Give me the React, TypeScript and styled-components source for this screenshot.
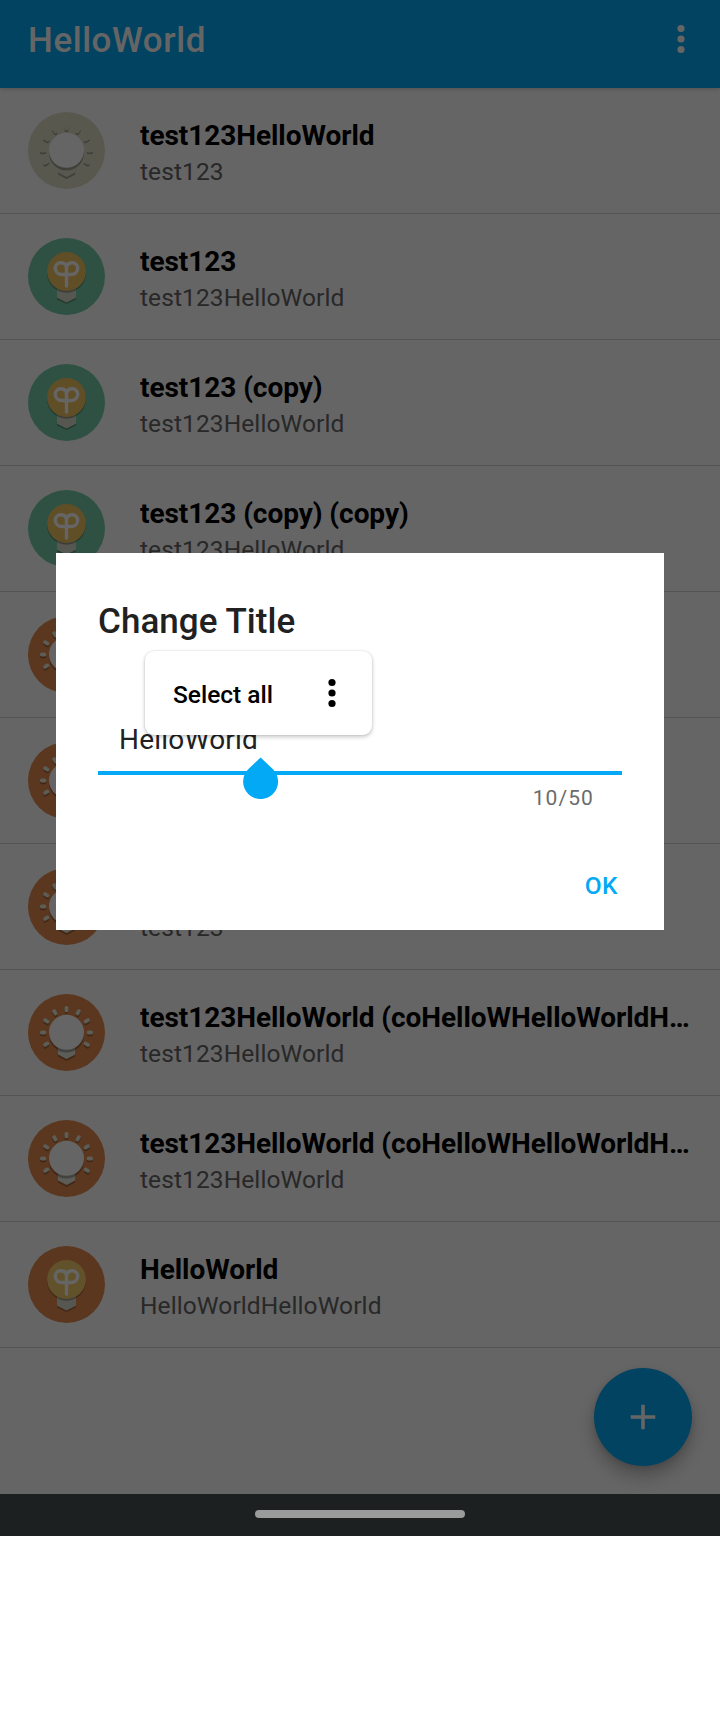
import React from "react";
import styled, { createGlobalStyle } from "styled-components";

const GlobalStyle = createGlobalStyle`
  *, *::before, *::after { box-sizing: border-box; }
  body { margin: 0; background: #fff; font-family: Roboto, "Liberation Sans", sans-serif; }
`;

const Screen = styled.div`
  position: relative;
  width: 720px;
  height: 1536px;
  display: flex;
  flex-direction: column;
  overflow: hidden;
`;

const Toolbar = styled.header`
  position: relative;
  flex: none;
  height: 88px;
  padding: 0 35px 10px 28px;
  display: flex;
  align-items: center;
  justify-content: space-between;
  background: #03a9f4;
  box-shadow: 0 1px 4px rgba(0, 0, 0, 0.2);
  color: #fff;
`;

const AppTitle = styled.h1`
  margin: 0;
  padding-top: 3px;
  font-size: 35px;
  line-height: 42px;
  font-weight: 500;
  letter-spacing: 0.55px;
`;

const List = styled.main`
  flex: 1;
  background: #fff;
`;

const Row = styled.article`
  height: 126px;
  padding: 0 28px;
  display: flex;
  align-items: center;
  gap: 35px;
  border-bottom: 1px solid #d4d4d4;
`;

const RowText = styled.div`
  flex: 1;
  min-width: 0;
  padding-top: 7px;
`;

const RowTitle = styled.div`
  font-size: 28px;
  line-height: 36px;
  font-weight: 700;
  letter-spacing: -0.06px;
  color: #000;
  white-space: nowrap;
  overflow: hidden;
  text-overflow: ellipsis;
`;

const RowSubtitle = styled.div`
  font-size: 24.5px;
  line-height: 36px;
  letter-spacing: 0.1px;
  color: #666;
`;

const Fab = styled.button`
  position: absolute;
  left: 594px;
  top: 1368px;
  width: 98px;
  height: 98px;
  padding: 0;
  border: 0;
  border-radius: 50%;
  display: grid;
  place-items: center;
  background: #03a9f4;
  box-shadow: 0 10px 18px rgba(0, 0, 0, 0.26), 0 2px 6px rgba(0, 0, 0, 0.1);
`;

const NavBar = styled.footer`
  flex: none;
  height: 42px;
  display: flex;
  justify-content: center;
  padding-top: 16px;
  background: #1c2021;
`;

const HomeHandle = styled.div`
  width: 210px;
  height: 8px;
  border-radius: 4px;
  background: #999c9b;
`;

const Scrim = styled.div`
  position: absolute;
  inset: 0 0 42px;
  padding: 553px 56px 0;
  background: rgba(0, 0, 0, 0.605);
`;

const Dialog = styled.section`
  position: relative;
  height: 377px;
  padding: 47px 42px 0;
  display: flex;
  flex-direction: column;
  background: #fff;
`;

const DialogTitle = styled.h2`
  margin: 0;
  font-size: 35px;
  line-height: 44px;
  font-weight: 500;
  letter-spacing: 0.05px;
  color: #212121;
`;

const Field = styled.div`
  height: 131px;
  padding: 76px 21px 0;
  border-bottom: 4px solid #03a9f4;
  font-size: 28px;
  line-height: 40px;
  letter-spacing: 0.22px;
  color: #212121;
`;

const Counter = styled.div`
  padding: 8px 28px 0 0;
  text-align: right;
  font-size: 21px;
  line-height: 30px;
  letter-spacing: 1.1px;
  color: #6b6b6b;
`;

const Confirm = styled.button`
  margin: 57px 4px 0 0;
  padding: 0;
  border: 0;
  align-self: flex-end;
  background: none;
  font: 500 24.5px/32px Roboto, "Liberation Sans", sans-serif;
  letter-spacing: 0.4px;
  color: #03a9f4;
`;

const SelectionMenu = styled.div`
  position: absolute;
  left: 89px;
  top: 98px;
  width: 227px;
  height: 84px;
  padding: 0 36px 0 28px;
  display: flex;
  align-items: center;
  justify-content: space-between;
  border-radius: 9px;
  background: #fff;
  box-shadow: 0 2px 4px rgba(0, 0, 0, 0.22), 0 0 2px rgba(0, 0, 0, 0.14);
  font-size: 24.5px;
  font-weight: 500;
  color: #000;
`;

const MenuLabel = styled.span`
  padding-top: 2px;
`;

const CursorHandle = styled.svg`
  position: absolute;
  left: 187px;
  top: 204px;
`;

const MoreDots = () => (
  <svg width="8" height="30" viewBox="0 0 8 30" fill="currentColor">
    <circle cx="4" cy="4.5" r="3.6" />
    <circle cx="4" cy="15" r="3.6" />
    <circle cx="4" cy="25.5" r="3.6" />
  </svg>
);

const rayAngles = [-120, -90, -60, -30, 0, 30, 60, 90, 120];

// The group is shifted after the rays are rotated, so every shadow falls downwards.
const Rays = ({ fill, dy = 0 }: { fill: string; dy?: number }) => (
  <g fill={fill} transform={`translate(0 ${dy})`}>
    {rayAngles.map((a) => (
      <rect key={a} x="36.6" y="12" width="3.8" height="6.3" rx="1.6" transform={`rotate(${a} 38.5 38.5)`} />
    ))}
  </g>
);

const OffBulb = ({ back, base }: { back: string; base: string }) => (
  <svg width="77" height="77" viewBox="0 0 77 77">
    <circle cx="38.5" cy="38.5" r="38.5" fill={back} />
    <Rays fill="rgba(0,0,0,.28)" dy={1.8} />
    <Rays fill={base} />
    <path d="M30 52H47.2V62.6L38.6 67L30 62.6Z" fill="#000" fillOpacity=".28" />
    <path d="M30 50H47.2V60.6L38.6 65L30 60.6Z" fill={base} />
    <circle cx="38.5" cy="41" r="17.5" fill="#000" fillOpacity=".28" />
    <circle cx="38.5" cy="38.3" r="17.5" fill="#fff" />
  </svg>
);

const OnBulb = ({ back, glass }: { back: string; glass: string }) => (
  <svg width="77" height="77" viewBox="0 0 77 77">
    <circle cx="38.5" cy="38.5" r="38.5" fill={back} />
    <path d="M29 50H48V61.4L38.5 66L29 61.4Z" fill="#000" fillOpacity=".28" />
    <path d="M29 48H48V59.8L38.5 64.4L29 59.8Z" fill="#d9dcc9" />
    <circle cx="38.5" cy="35.4" r="19.4" fill="#000" fillOpacity=".28" />
    <circle cx="38.5" cy="33.5" r="19.4" fill={glass} />
    <path
      d="M38.5 48V30.5C38.5 26.5 36 24.7 32.8 24.7C29.5 24.7 27.3 27.3 27.3 30.2C27.3 34 30.3 36.5 34 36.5H43C46.7 36.5 49.7 34 49.7 30.2C49.7 27.3 47.5 24.7 44.2 24.7C41 24.7 38.5 26.5 38.5 30.5"
      fill="none"
      stroke="#fff"
      strokeWidth="3.4"
      strokeLinecap="round"
    />
  </svg>
);

type Kind = "grey" | "green" | "orange" | "amber";

const Bulb = ({ kind }: { kind: Kind }) => {
  if (kind === "grey") return <OffBulb back="#dddfc8" base="#dddfc8" />;
  if (kind === "orange") return <OffBulb back="#e48b4d" base="#e6ead9" />;
  if (kind === "green") return <OnBulb back="#75cda9" glass="#f2c562" />;
  return <OnBulb back="#e48b4d" glass="#f5d06c" />;
};

const longTitle = "test123HelloWorld (coHelloWHelloWorldHelloWorld";

const items: { kind: Kind; title: string; subtitle: string }[] = [
  { kind: "grey", title: "test123HelloWorld", subtitle: "test123" },
  { kind: "green", title: "test123", subtitle: "test123HelloWorld" },
  { kind: "green", title: "test123 (copy)", subtitle: "test123HelloWorld" },
  { kind: "green", title: "test123 (copy) (copy)", subtitle: "test123HelloWorld" },
  { kind: "orange", title: "test123", subtitle: "test123" },
  { kind: "orange", title: "test123", subtitle: "test123" },
  { kind: "orange", title: "test123", subtitle: "test123" },
  { kind: "orange", title: longTitle, subtitle: "test123HelloWorld" },
  { kind: "orange", title: longTitle, subtitle: "test123HelloWorld" },
  { kind: "amber", title: "HelloWorld", subtitle: "HelloWorldHelloWorld" },
];

export default function App() {
  return (
    <>
      <GlobalStyle />
      <Screen>
        <Toolbar>
          <AppTitle>HelloWorld</AppTitle>
          <MoreDots />
        </Toolbar>
        <List>
          {items.map((item, i) => (
            <Row key={i}>
              <Bulb kind={item.kind} />
              <RowText>
                <RowTitle>{item.title}</RowTitle>
                <RowSubtitle>{item.subtitle}</RowSubtitle>
              </RowText>
            </Row>
          ))}
        </List>
        <NavBar>
          <HomeHandle />
        </NavBar>
        <Fab aria-label="Add">
          <svg width="26" height="26" viewBox="0 0 26 26">
            <path d="M13 0.7V25.3M0.7 13H25.3" stroke="#fff" strokeWidth="3.6" />
          </svg>
        </Fab>
        <Scrim>
          <Dialog>
            <DialogTitle>Change Title</DialogTitle>
            <Field>HelloWorld</Field>
            <Counter>10/50</Counter>
            <Confirm>OK</Confirm>
            <CursorHandle width="36" height="42" viewBox="0 0 36 42">
              <path d="M17.6 0.5L30 12.2A17.5 17.5 0 1 1 5.2 12.2Z" fill="#03a9f4" />
            </CursorHandle>
            <SelectionMenu>
              <MenuLabel>Select all</MenuLabel>
              <MoreDots />
            </SelectionMenu>
          </Dialog>
        </Scrim>
      </Screen>
    </>
  );
}
